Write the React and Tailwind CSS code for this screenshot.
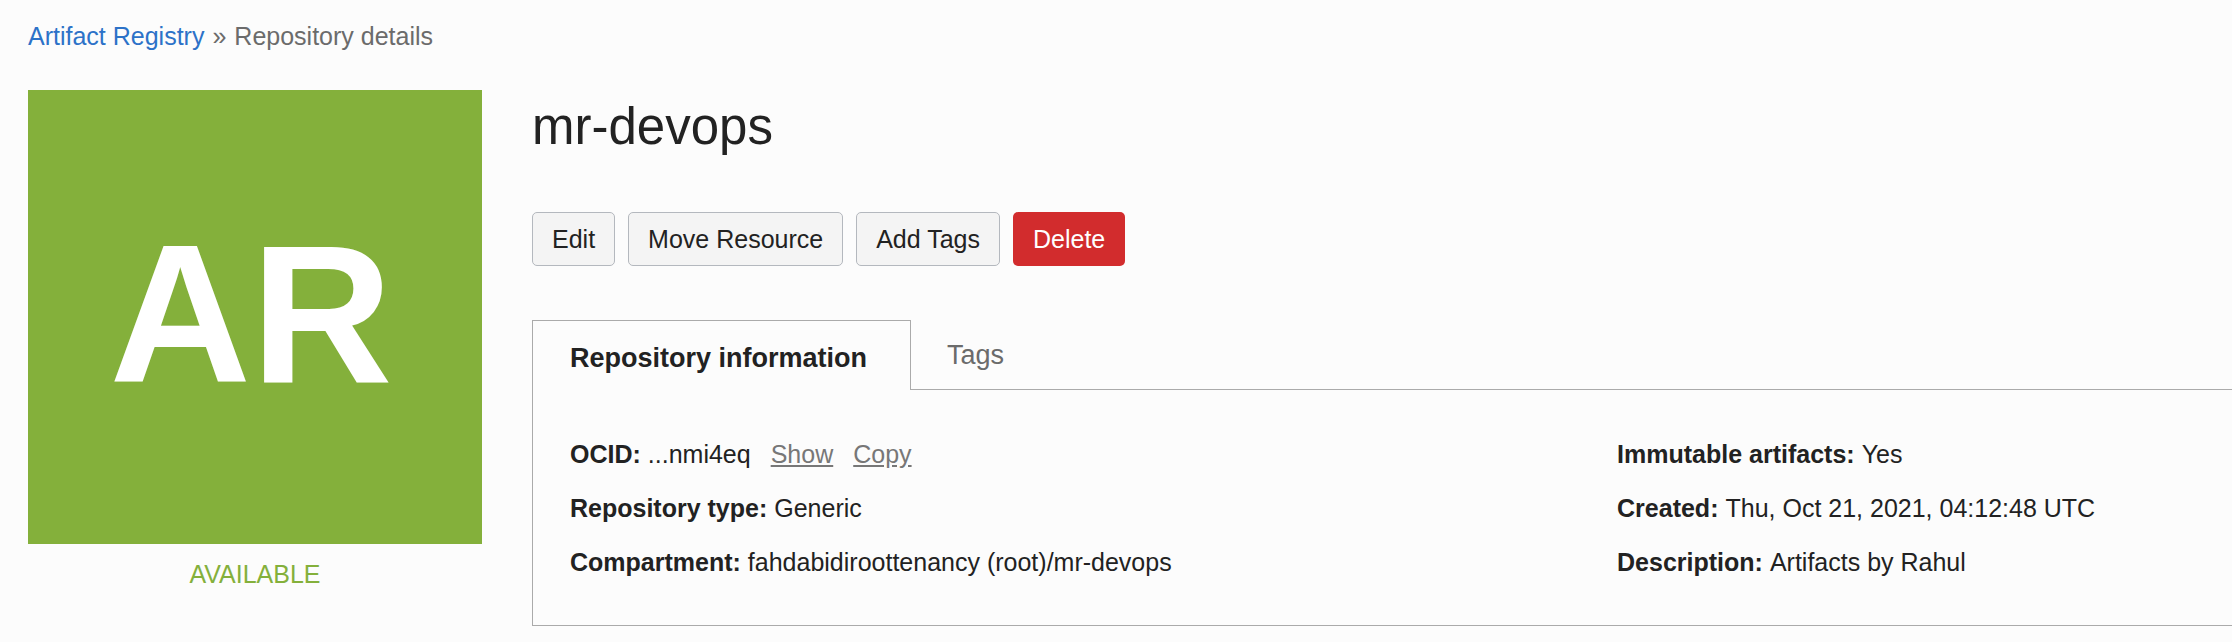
const actions = ["Edit", "Move Resource", "Add Tags"];

function Field({ label, children }) {
  return (
    <div className="flex gap-[7px]">
      <dt className="font-bold">{label}:</dt>
      <dd className="flex gap-5">{children}</dd>
    </div>
  );
}

function Breadcrumb() {
  return (
    <nav aria-label="Breadcrumb" className="flex gap-2 pt-[18px] text-[#6b6b6b]">
      <a href="#registry" className="text-[#2c72c8]">Artifact Registry</a>
      <span>»</span>
      <span>Repository details</span>
    </nav>
  );
}

function StatusTile() {
  return (
    <aside className="w-[454px] shrink-0 text-center text-[#84b03b]">
      <div className="flex aspect-square items-center justify-center bg-[#84b03b] pr-2 pb-1 text-[196px] font-bold text-white">
        AR
      </div>
      <p className="mt-3">AVAILABLE</p>
    </aside>
  );
}

export default function App() {
  return (
    <div className="min-h-screen bg-[#fcfcfc] pb-4 pl-7 font-['Liberation_Sans',Arial,sans-serif] text-[25px] leading-[36px] text-[#222]">
      <Breadcrumb />
      <main className="mt-9 flex gap-[50px]">
        <StatusTile />
        <section className="min-w-0 grow">
          <h1 className="pt-1 text-[51px] leading-[66px]">mr-devops</h1>
          <div className="mt-[52px] flex gap-[13px]">
            {actions.map((name) => (
              <button key={name} type="button" className="h-[54px] rounded-[5px] border border-[#b4b8be] bg-[#f4f4f4] px-[19px]">
                {name}
              </button>
            ))}
            <button type="button" className="h-[54px] rounded-[5px] bg-[#d22c2d] px-5 text-white">Delete</button>
          </div>
          <div role="tablist" className="mt-[54px] flex text-[27px]">
            <button type="button" role="tab" aria-selected="true" className="h-[70px] border-x border-t border-[#aaa] pt-1 pr-[43px] pl-[37px] font-bold">
              Repository information
            </button>
            <button type="button" role="tab" aria-selected="false" className="grow border-b border-[#aaa] px-9 text-left text-[#6b6b6b]">
              Tags
            </button>
          </div>
          <div role="tabpanel" className="grid grid-cols-[63fr_37fr] border-b border-l border-[#aaa] pt-[46px] pb-[45px] pl-[37px]">
            <dl className="flex flex-col gap-[18px]">
              <Field label="OCID">
                ...nmi4eq
                <a href="#show" className="text-[#777] underline">Show</a>
                <a href="#copy" className="text-[#777] underline">Copy</a>
              </Field>
              <Field label="Repository type">Generic</Field>
              <Field label="Compartment">fahdabidiroottenancy (root)/mr-devops</Field>
            </dl>
            <dl className="flex flex-col gap-[18px]">
              <Field label="Immutable artifacts">Yes</Field>
              <Field label="Created">Thu, Oct 21, 2021, 04:12:48 UTC</Field>
              <Field label="Description">Artifacts by Rahul</Field>
            </dl>
          </div>
        </section>
      </main>
    </div>
  );
}
